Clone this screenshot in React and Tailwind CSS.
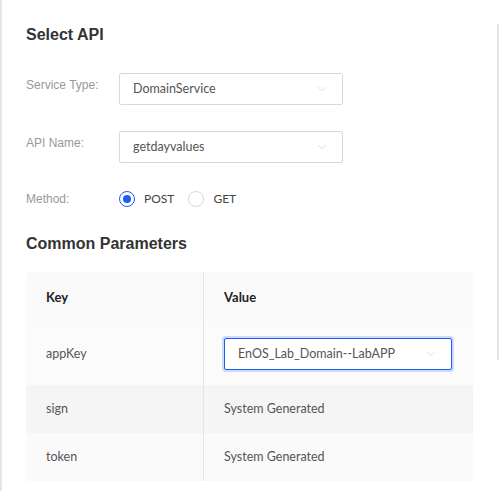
import { ChevronDown } from "lucide-react";

const Select = ({ value, focused, className = "" }) => (
    <div
        className={`flex items-center justify-between rounded-[2px] bg-white px-[13px] ${
            focused
                ? "border border-[#1e5bf6] shadow-[0_0_0_2px_rgba(30,91,246,0.2)]"
                : "border border-[#d9d9d9]"
        } ${className}`}
    >
        <span className="text-[12.5px] text-[#555] font-['Lato',sans-serif]">{value}</span>
        <ChevronDown size={14} strokeWidth={1} className="text-[#c4c4c4]" />
    </div>
);

const Row = ({ label, labelClass = "-mt-[8px]", children }) => (
    <div className="flex items-center">
        <div className={`w-[93px] text-[12px] text-[#999] ${labelClass}`}>{label}</div>
        {children}
    </div>
);

const Radio = ({ checked, label }) => (
    <label className="flex items-center gap-[9px]">
        <span
            className={`flex h-[16px] w-[16px] items-center justify-center rounded-full border bg-white ${
                checked ? "border-[#1e5bf6]" : "border-[#d9d9d9]"
            }`}
        >
            {checked && <span className="h-[8px] w-[8px] rounded-full bg-[#1e5bf6]" />}
        </span>
        <span className="text-[12px] text-[#444] font-['Lato',sans-serif]">{label}</span>
    </label>
);

const params = [
    { key: "sign", bg: "bg-[#f5f5f5]" },
    { key: "token", bg: "bg-[#fafafa]" },
];

export default function App() {
    return (
        <div className="flex h-[491px] w-[499px] bg-white font-['Liberation_Sans',Arial,sans-serif]">
            <div className="w-[2px] shrink-0 bg-[#e5e5e5]" />
            <div className="flex-1 pl-[24px] pt-[26px]">
                {/* Select API */}
                <h2 className="text-[16px] font-bold leading-[18px] text-[#333]">Select API</h2>
                <div className="mt-[29px] flex flex-col gap-[26px]">
                    <Row label="Service Type:">
                        <Select value="DomainService" className="h-[32px] w-[224px]" />
                    </Row>
                    <Row label="API Name:">
                        <Select value="getdayvalues" className="h-[32px] w-[224px]" />
                    </Row>
                    <Row label="Method:" labelClass="">
                        <div className="flex h-[20px] items-center gap-[14px]">
                            <Radio checked label="POST" />
                            <Radio label="GET" />
                        </div>
                    </Row>
                </div>

                {/* Common Parameters */}
                <h2 className="mt-[26px] text-[16px] font-bold leading-[18px] text-[#333]">
                    Common Parameters
                </h2>
                <div className="mt-[19px] w-[447px] overflow-hidden rounded-t-[4px] font-['Lato',sans-serif] text-[12.5px]">
                    <div className="flex h-[51px] items-center bg-[#fafafa] text-[13px] font-bold text-[#222]">
                        <div className="flex h-full w-[178px] items-center border-r border-[#e5e5e5] pl-[20px]">Key</div>
                        <div className="pl-[20px]">Value</div>
                    </div>
                    <div className="flex h-[62px] items-center bg-[#fbfbfb] text-[#555]">
                        <div className="flex h-full w-[178px] items-center border-r border-[#e5e5e5] pl-[20px]">appKey</div>
                        <div className="pl-[20px]">
                            <Select value="EnOS_Lab_Domain--LabAPP" focused className="h-[32px] w-[228px]" />
                        </div>
                    </div>
                    {params.map((p) => (
                        <div key={p.key} className={`flex h-[48px] items-center text-[#555] ${p.bg}`}>
                            <div className="flex h-full w-[178px] items-center border-r border-[#e5e5e5] pl-[20px]">{p.key}</div>
                            <div className="pl-[20px]">System Generated</div>
                        </div>
                    ))}
                </div>
            </div>
            <div className="mt-[24px] h-[336px] w-[2px] shrink-0 bg-[#e5e5e5]" />
        </div>
    );
}
